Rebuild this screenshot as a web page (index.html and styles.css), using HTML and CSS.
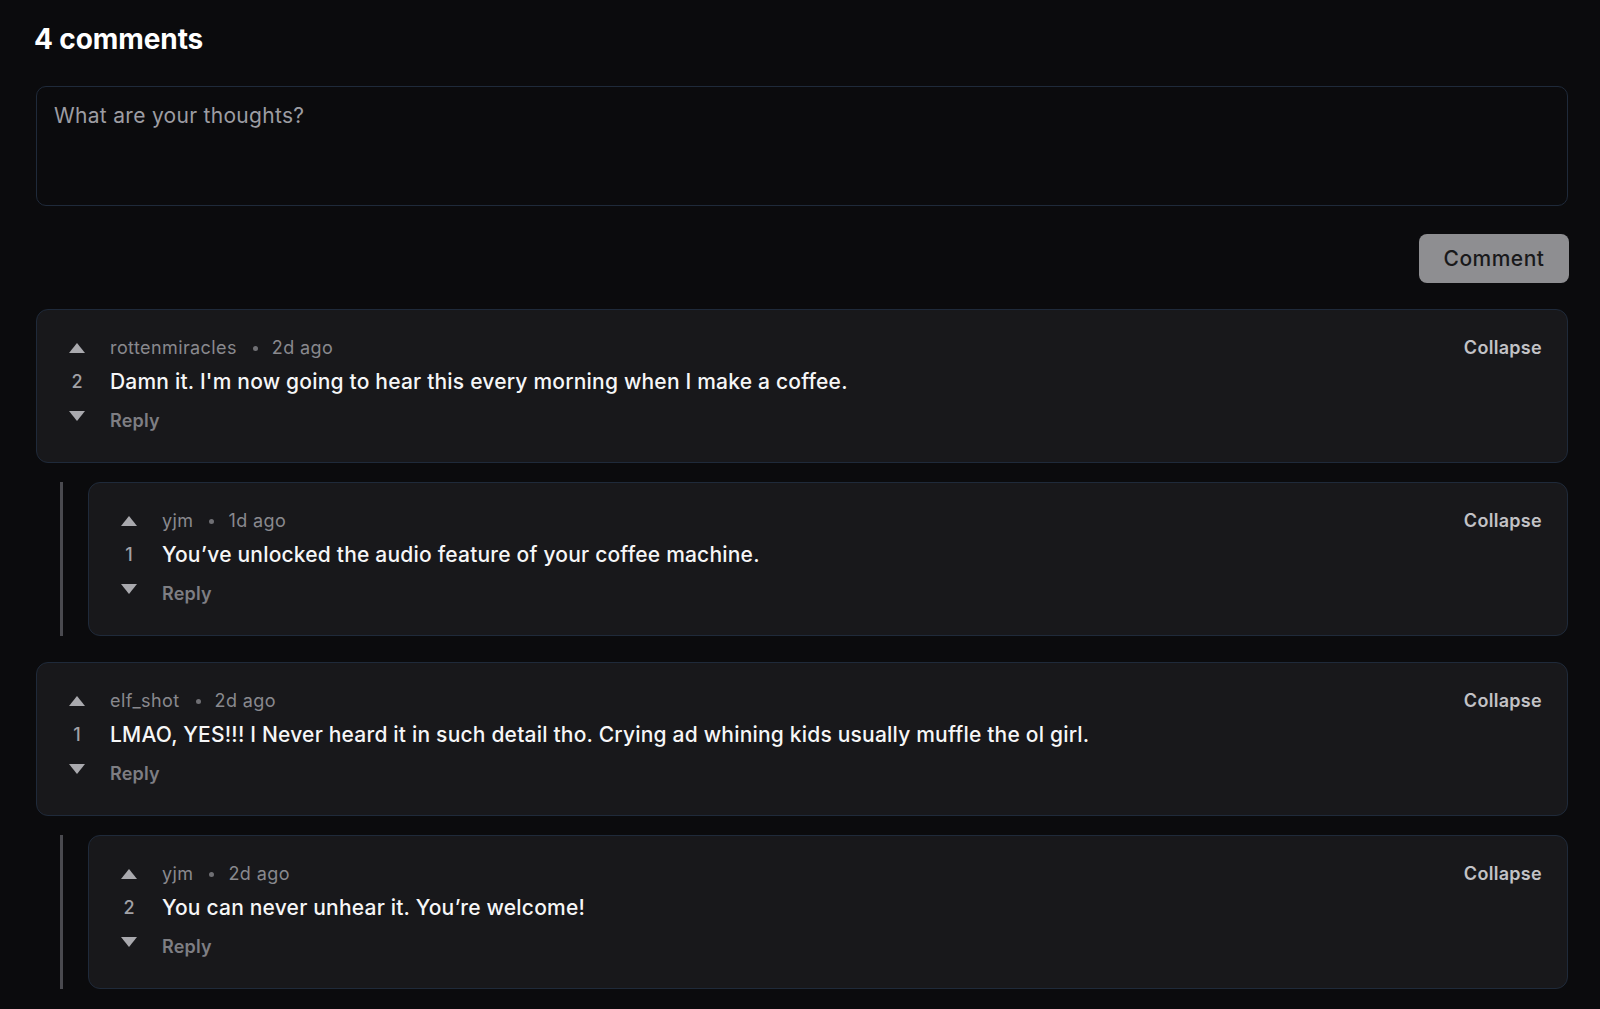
FILE: index.html
```html
<!DOCTYPE html>
<html lang="en">
<head>
<meta charset="utf-8">
<title>Comments</title>
<link rel="stylesheet" href="styles.css">
</head>
<body>
<main class="page">
  <h2 class="title">4 comments</h2>
  <textarea class="composer" placeholder="What are your thoughts?"></textarea>
  <div class="composer-actions">
    <button class="btn-comment" type="button">Comment</button>
  </div>

  <section class="thread">
    <article class="card">
      <div class="votes">
        <svg class="arrow" viewBox="0 0 16 10" width="16" height="10"><path d="M8 0 L16 10 L0 10 Z"/></svg>
        <span class="score">2</span>
        <svg class="arrow" viewBox="0 0 16 10" width="16" height="10"><path d="M0 0 L16 0 L8 10 Z"/></svg>
      </div>
      <div class="content">
        <div class="meta-row">
          <div class="meta"><span class="user">rottenmiracles</span><span class="dot"></span><span class="time">2d ago</span></div>
          <button class="collapse" type="button">Collapse</button>
        </div>
        <p class="body">Damn it. I'm now going to hear this every morning when I make a coffee.</p>
        <button class="reply" type="button">Reply</button>
      </div>
    </article>
    <div class="replies">
      <article class="card">
        <div class="votes">
          <svg class="arrow" viewBox="0 0 16 10" width="16" height="10"><path d="M8 0 L16 10 L0 10 Z"/></svg>
          <span class="score">1</span>
          <svg class="arrow" viewBox="0 0 16 10" width="16" height="10"><path d="M0 0 L16 0 L8 10 Z"/></svg>
        </div>
        <div class="content">
          <div class="meta-row">
            <div class="meta"><span class="user">yjm</span><span class="dot"></span><span class="time">1d ago</span></div>
            <button class="collapse" type="button">Collapse</button>
          </div>
          <p class="body">You’ve unlocked the audio feature of your coffee machine.</p>
          <button class="reply" type="button">Reply</button>
        </div>
      </article>
    </div>
  </section>

  <section class="thread">
    <article class="card">
      <div class="votes">
        <svg class="arrow" viewBox="0 0 16 10" width="16" height="10"><path d="M8 0 L16 10 L0 10 Z"/></svg>
        <span class="score">1</span>
        <svg class="arrow" viewBox="0 0 16 10" width="16" height="10"><path d="M0 0 L16 0 L8 10 Z"/></svg>
      </div>
      <div class="content">
        <div class="meta-row">
          <div class="meta"><span class="user">elf_shot</span><span class="dot"></span><span class="time">2d ago</span></div>
          <button class="collapse" type="button">Collapse</button>
        </div>
        <p class="body">LMAO, YES!!! I Never heard it in such detail tho. Crying ad whining kids usually muffle the ol girl.</p>
        <button class="reply" type="button">Reply</button>
      </div>
    </article>
    <div class="replies">
      <article class="card">
        <div class="votes">
          <svg class="arrow" viewBox="0 0 16 10" width="16" height="10"><path d="M8 0 L16 10 L0 10 Z"/></svg>
          <span class="score">2</span>
          <svg class="arrow" viewBox="0 0 16 10" width="16" height="10"><path d="M0 0 L16 0 L8 10 Z"/></svg>
        </div>
        <div class="content">
          <div class="meta-row">
            <div class="meta"><span class="user">yjm</span><span class="dot"></span><span class="time">2d ago</span></div>
            <button class="collapse" type="button">Collapse</button>
          </div>
          <p class="body">You can never unhear it. You’re welcome!</p>
          <button class="reply" type="button">Reply</button>
        </div>
      </article>
    </div>
  </section>
</main>
</body>
</html>
```

FILE: styles.css
```css
* { box-sizing: border-box; }

html, body {
  margin: 0;
  background: #0b0b0d;
  font-family: Inter, "Noto Sans", sans-serif;
  color: #f4f4f5;
}

.page {
  padding: 22px 32px 24px 36px;
}

.title {
  margin: 0 0 0 -2px;
  font-size: 28px;
  line-height: 34px;
  font-weight: 700;
  letter-spacing: -0.1px;
  color: #ffffff;
}

.composer {
  display: block;
  width: 100%;
  height: 120px;
  margin-top: 30px;
  padding: 15px 17px;
  background: #0b0b0d;
  border: 1px solid #1f2a3a;
  border-radius: 10px;
  resize: none;
  font-family: Inter, "Noto Sans", sans-serif;
  font-size: 21px;
  line-height: 28px;
  letter-spacing: 0.3px;
  color: #f4f4f5;
  outline: none;
}

.composer::placeholder {
  color: #9d9da3;
}

.composer-actions {
  display: flex;
  justify-content: flex-end;
  margin-top: 28px;
}

.btn-comment {
  width: 150px;
  height: 49px;
  margin-right: -1px;
  border: none;
  border-radius: 8px;
  background: #8e8e91;
  color: #19191b;
  font-family: Inter, "Noto Sans", sans-serif;
  font-size: 21px;
  font-weight: 500;
  letter-spacing: 0.5px;
}

.thread {
  margin-top: 26px;
}

.thread + .thread {
  margin-top: 26px;
}

.card {
  display: flex;
  gap: 25px;
  background: #18181b;
  border: 1px solid #1f2a3a;
  border-radius: 12px;
  padding: 24px 25px 28px 32px;
}

.votes {
  width: 16px;
  flex: none;
  display: flex;
  flex-direction: column;
  align-items: center;
  padding-top: 9px;
}

.arrow {
  display: block;
  fill: #a9a9ae;
}

.score {
  margin: 15px 0 16px;
  font-size: 18px;
  line-height: 27px;
  font-weight: 500;
  color: #a1a1a6;
}

.content {
  flex: 1;
  min-width: 0;
}

.meta-row {
  display: flex;
  justify-content: space-between;
  align-items: flex-start;
}

.meta {
  display: flex;
  align-items: center;
  font-size: 18px;
  line-height: 27px;
  letter-spacing: 0.4px;
  color: #89898e;
}

.dot {
  width: 5px;
  height: 5px;
  border-radius: 50%;
  background: #6f6f74;
  margin: 2px 14px 0 16px;
}

.collapse {
  border: none;
  background: none;
  padding: 0;
  font-family: Inter, "Noto Sans", sans-serif;
  font-size: 18px;
  line-height: 27px;
  font-weight: 600;
  letter-spacing: 0.3px;
  color: #c2c2c6;
}

.body {
  margin: 6px 0 0;
  font-size: 21px;
  line-height: 30px;
  font-weight: 500;
  letter-spacing: 0.2px;
  color: #f6f6f7;
}

.reply {
  display: block;
  margin-top: 10px;
  border: none;
  background: none;
  padding: 0;
  font-family: Inter, "Noto Sans", sans-serif;
  font-size: 18px;
  line-height: 27px;
  font-weight: 600;
  letter-spacing: 0.2px;
  color: #7e7e83;
}

.replies {
  margin: 19px 0 0 24px;
  border-left: 3px solid #4a4a4f;
  padding-left: 25px;
}
```
